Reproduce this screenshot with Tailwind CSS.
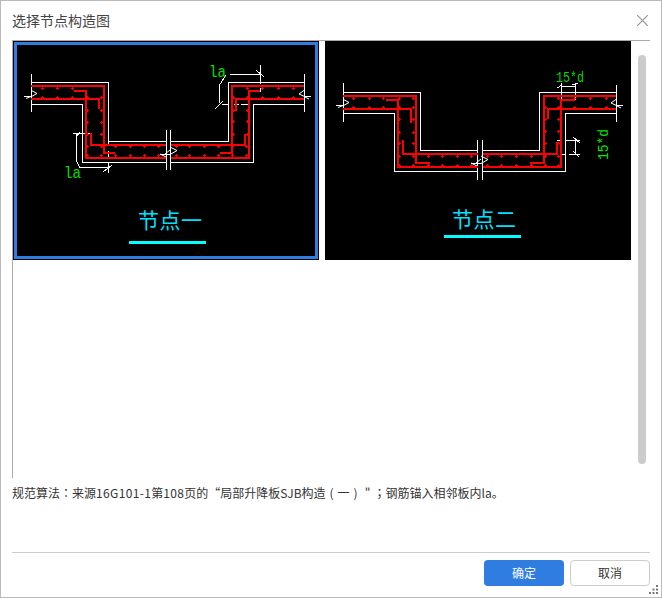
<!DOCTYPE html>
<html lang="zh-CN">
<head>
  <meta charset="UTF-8" />
  <title>选择节点构造图</title>
  <script src="https://cdn.jsdelivr.net/npm/@tailwindcss/browser@4"></script>
</head>
<body class="bg-white">
  <div class="relative w-[662px] h-[598px] flex flex-col bg-white border border-[#bbbbbb] font-['Noto_Sans_CJK_SC','Liberation_Sans',sans-serif]">

    <!-- title bar -->
    <div class="h-[39px] flex items-center justify-between pl-[11px] pr-[13px]">
      <h1 class="text-[14px] font-normal text-[#444444]">选择节点构造图</h1>
      <svg width="11" height="11" viewBox="0 0 11 11" fill="none" stroke="#999999" stroke-width="1.2"><path d="M0 0L11 11M11 0L0 11"/></svg>
    </div>

    <!-- node list -->
    <div class="h-[438px] mx-[11px] flex border-l border-t border-[#aaaaaa]">
      <div class="flex gap-[6px]">
        <div class="w-[306px] h-[219px] bg-black p-px">
          <div class="w-full h-full border-[3px] border-[#2f7de1]">
            <svg class="block w-full h-full" viewBox="17 45 298 211" fill="none">
              <g stroke="#ffffff" shape-rendering="crispEdges">
                <path d="M31.5 74V112M304.5 74V112M166.5 130V170M170.5 130V170"/>
                <path d="M31 82.5H108.5V141.5H166M31 104.5H82.5V162.5H166M171 141.5H228.5V82.5H305M171 162.5H253.5V104.5H305"/>
                <path d="M73 133.5H92M76.5 133V161L80 167.5H108M108.5 141V146M108.5 151V158M108.5 163V173M103 172L112 165M76 137L80 132"/>
                <path d="M230 74.5H261M260.5 65V84M260.5 88V92M256 70L264 77M219.5 103V85L226 75M215 109L223 101M222 104.5H229M234 104.5H239M241 104.5H249"/>
              </g>
              <g stroke="#ffffff">
                <path d="M24 96.5H31M31.5 90.5L37 93.5L31.5 96.5M31 96.5L26 98.5M311 96.5H304M304.5 90L299 94L304.5 96.5M304 96.5L309 99"/>
                <path d="M160 154.5H170L177 150.5L170 147M166 157L160 154M170 150L165 154"/>
              </g>
              <g stroke="#ff0000" stroke-width="2" shape-rendering="crispEdges">
                <path d="M31 86H104V153H115M74 91H86V158H166M31 99H99V109M91 133V145H166"/>
                <path d="M304 86H232V153H220M304 99H236V111M260 91H249V158H171M171 145H245V134"/>
              </g>
              <path stroke="#ff0000" shape-rendering="crispEdges" data-ticks="88:42,57,72 97:42,57,72,87,101 110:87,101 122:87,101 134:87,101 146:87,101,115,130,144,158,176,189,204,218,232,246 155:87,101,115,130,144,158,176,189,204,218,232,246 88:247,262,278,293 97:233,247,262,278,293 110:233,247 121:233,247 134:233,247"/>
              <text x="64" y="178" textLength="17" lengthAdjust="spacingAndGlyphs" class="text-[17px] fill-[#00e000] font-['Liberation_Mono',monospace]">la</text>
              <text x="209" y="77" textLength="17" lengthAdjust="spacingAndGlyphs" class="text-[17px] fill-[#00e000] font-['Liberation_Mono',monospace]">la</text>
              <text x="138" y="228" textLength="64" class="text-[21px] fill-[#00e0ff]">节点一</text>
              <path d="M129 242.5H206" stroke="#00ffff" stroke-width="3" shape-rendering="crispEdges"/>
            </svg>
          </div>
        </div>
        <div class="w-[306px] h-[219px] bg-black">
          <svg class="block w-full h-full" viewBox="325 41 306 219" fill="none">
            <g stroke="#ffffff" shape-rendering="crispEdges">
              <path d="M343.5 83V122M616.5 85V122M477.5 140V180M482.5 140V180"/>
              <path d="M343 92.5H420.5V150.5H478M343 113.5H394.5V171.5H478M482 150.5H539.5V92.5H617M482 171.5H565.5V113.5H617"/>
              <path d="M561.5 83V100M575.5 83V100M561 86.5H576M557 88L562 85M572 85L578 83"/>
              <path d="M557 140.5H562M566 140.5H580M561 154.5H566M569 154.5H580M575.5 141V154M573 137L580 143M573 151L579 157"/>
            </g>
            <g stroke="#ffffff">
              <path d="M336 105.5H343M343.5 99.5L349 102.5L343.5 105.5M343 105.5L338 107.5M623 105.5H616M616.5 99L611 103L616.5 105.5M616 105.5L621 108"/>
              <path d="M471 163.5H481L488 159.5L481 156M477 166L471 163M481 159L476 163"/>
            </g>
            <g stroke="#ff0000" stroke-width="2" shape-rendering="crispEdges">
              <path d="M343 96H416V163H430M386 100H398V167H478M343 109H411V123M403 140V154H478"/>
              <path d="M616 96H544V163H530M616 109H548V119M575 100H561V167H483M483 154H557V142"/>
            </g>
            <path stroke="#ff0000" shape-rendering="crispEdges" data-ticks="98:353,369,383,399,413 107:353,369,383,399,413 119:399,413 132:399,413 143:399,413 156:399,413,428,442,457,471,487,501,516,531,545,558 165:399,413,428,442,457,471,487,501,516,531,545,558 98:558,574,590,606 107:545,558,574,590,606 119:545,558 131:545,558 143:545,558"/>
            <text x="556" y="82" textLength="28" lengthAdjust="spacingAndGlyphs" class="text-[15px] fill-[#00d800] font-['Liberation_Mono',monospace]">15*d</text>
            <text transform="translate(608 160) rotate(-90)" textLength="31" lengthAdjust="spacingAndGlyphs" class="text-[15px] fill-[#00e800] font-['Liberation_Mono',monospace]">15*d</text>
            <text x="452" y="227" textLength="64" class="text-[21px] fill-[#00e0ff]">节点二</text>
            <path d="M444 236.5H521" stroke="#00ffff" stroke-width="3" shape-rendering="crispEdges"/>
          </svg>
        </div>
      </div>
      <div class="w-2 h-[409px] mt-[14px] ml-[7px] rounded-full bg-[#cccccc]"></div>
    </div>

    <!-- description -->
    <p class="mt-[6px] ml-[11px] text-[12px] leading-[18px] text-[#333333] whitespace-nowrap">规范算法<span class="inline-block w-3 text-center font-['Noto_Sans_CJK_TC',sans-serif]">：</span>来源<span class="tracking-[0.35px]">16G101-1</span>第<span class="tracking-[0.35px]">108</span>页的“局部升降板SJB构造<span class="inline-block w-3 text-center">(</span>一<span class="inline-block w-3 text-center">)</span><span class="inline-block w-3 text-center">"</span><span class="inline-block w-3 text-center font-['Noto_Sans_CJK_TC',sans-serif]">；</span>钢筋锚入相邻板内la。</p>

    <!-- footer -->
    <div class="mt-[50px] mx-[11px] h-px bg-[#cccccc]"></div>
    <div class="mt-[7px] mr-[11px] flex justify-end gap-[6px]">
      <button class="w-20 h-[26px] rounded bg-[#2f7de1] text-[12px] text-white">确定</button>
      <button class="w-20 h-[26px] rounded bg-white border border-[#cccccc] text-[12px] text-[#333333]">取消</button>
    </div>

    <!-- resize grip -->
    <svg class="absolute right-[2px] bottom-[2px]" width="10" height="10" viewBox="0 0 10 10" fill="#777777">
      <rect x="7" y="0" width="2" height="2"/>
      <rect x="3.5" y="3.5" width="2" height="2"/><rect x="7" y="3.5" width="2" height="2"/>
      <rect x="0" y="7" width="2" height="2"/><rect x="3.5" y="7" width="2" height="2"/><rect x="7" y="7" width="2" height="2"/>
    </svg>
  </div>

  <script>
    // small + marks along the rebars, "y:x,x,x" per row
    document.querySelectorAll('[data-ticks]').forEach(el => {
      let d = '';
      el.dataset.ticks.split(' ').forEach(row => {
        const [y, xs] = row.split(':');
        xs.split(',').forEach(x => {
          d += `M${+x - 1} ${+y + 0.5}h3M${+x + 0.5} ${+y - 1}v3`;
        });
      });
      el.setAttribute('d', d);
    });
  </script>
</body>
</html>
